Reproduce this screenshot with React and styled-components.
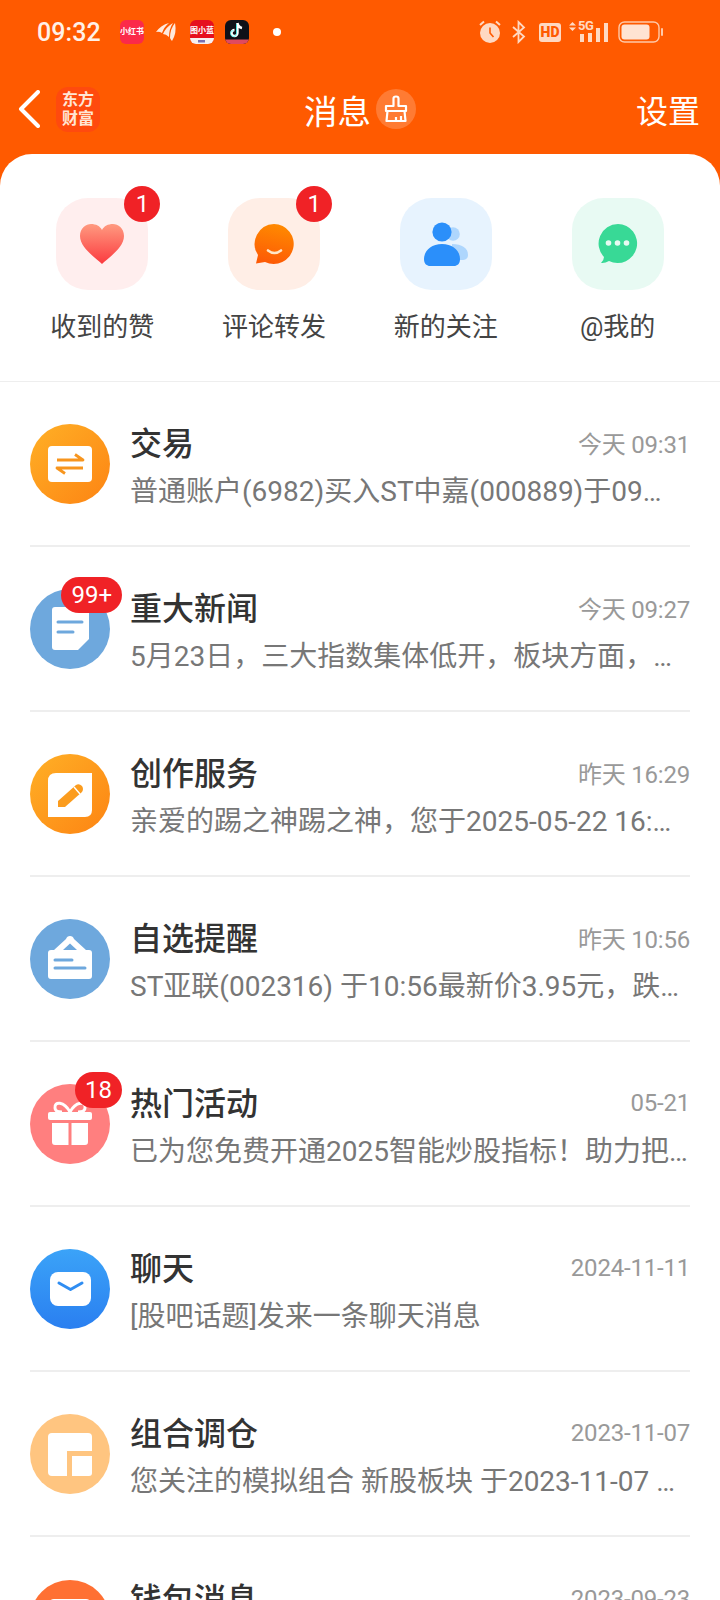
import React from "react";
import styled, { createGlobalStyle } from "styled-components";

const GlobalStyle = createGlobalStyle`
  html, body {
    margin: 0;
    padding: 0;
    background: #ff5a00;
  }
  * {
    box-sizing: border-box;
  }
`

const Page = styled.div`
  width: 720px;
  height: 1600px;
  overflow: hidden;
  background: #ff5a00;
  font-family: Roboto, "Noto Sans CJK SC", sans-serif;
`

const StatusBar = styled.div`
  height: 64px;
  padding: 0 56px 0 37px;
  display: flex;
  align-items: center;
  color: #fff1e8;
`
const Clock = styled.span`
  font-size: 25px;
  font-weight: 500;
  letter-spacing: 0.1px;
  margin-right: 19px;
`
const AppIcon = styled.div`
  width: 24px;
  height: 24px;
  margin-right: 11px;
  border-radius: 6px;
  background: ${(p) => p.$bg || "transparent"};
  color: white;
  font-size: 8px;
  font-weight: 700;
  line-height: 24px;
  text-align: center;
  white-space: nowrap;
  overflow: hidden;
  display: flex;
  align-items: center;
  justify-content: center;
  svg {
    display: block;
  }
`
const Dot = styled.span`
  width: 8px;
  height: 8px;
  border-radius: 50%;
  background: #fff;
  margin-left: 13px;
`
const StatusRight = styled.div`
  margin-left: auto;
  display: flex;
  align-items: center;
  gap: 10px;
  svg {
    display: block;
  }
`
const HdBadge = styled.span`
  width: 22px;
  height: 19px;
  margin: 0 -2px 0 2px;
  border-radius: 3px;
  background: #ffd9c2;
  color: #ff5a00;
  font-size: 14px;
  font-weight: 900;
  line-height: 19px;
  text-align: center;
`
const Signal = styled.div`
  position: relative;
  width: 39px;
  height: 22px;
`
const FiveG = styled.span`
  position: absolute;
  left: 9px;
  top: -1px;
  color: #ffd9c2;
  font-size: 13px;
  font-weight: 700;
  line-height: 12px;
  letter-spacing: -0.5px;
`

const NavBar = styled.div`
  height: 90px;
  padding: 0 20px 0 18px;
  display: grid;
  grid-template-columns: 1fr auto 1fr;
  align-items: center;
`
const NavLeft = styled.div`
  display: flex;
  align-items: center;
  gap: 16px;
`
const BrandLogo = styled.div`
  width: 44px;
  height: 45px;
  border-radius: 12px;
  background: #ff4a0e;
  color: #ffe6d5;
  font-size: 16px;
  font-weight: 700;
  line-height: 19px;
  text-align: center;
  padding-top: 3px;
`
const NavTitle = styled.div`
  display: flex;
  align-items: center;
  gap: 5px;
  padding-left: 2px;
  color: white;
  font-size: 33.5px;
`
const CleanButton = styled.div`
  width: 40px;
  height: 40px;
  border-radius: 50%;
  background: rgba(255, 255, 255, 0.2);
  display: flex;
  align-items: center;
  justify-content: center;
`
const NavAction = styled.div`
  justify-self: end;
  color: white;
  font-size: 32px;
`

const Sheet = styled.div`
  background: white;
  border-radius: 32px 32px 0 0;
`
const Shortcuts = styled.div`
  height: 228px;
  padding: 44px 16.5px 0;
  display: grid;
  grid-template-columns: repeat(4, 1fr);
  align-items: start;
  border-bottom: 1px solid #eee;
`
const Shortcut = styled.div`
  display: flex;
  flex-direction: column;
  align-items: center;
  gap: 15px;
`
const Tile = styled.div`
  position: relative;
  width: 92px;
  height: 92px;
  border-radius: 32px;
  background: ${(p) => p.$bg};
  display: flex;
  align-items: center;
  justify-content: center;
`
const ShortcutLabel = styled.div`
  color: #444;
  font-size: 26px;
  line-height: 44px;
`
const CountBadge = styled.span`
  position: absolute;
  top: -12px;
  right: -12px;
  min-width: 36px;
  height: 36px;
  padding: 0 10px;
  border-radius: 18px;
  background: #f02226;
  color: white;
  font-size: 24px;
  line-height: 36px;
  text-align: center;
`

const Row = styled.div`
  height: 165px;
  margin: 0 30px;
  display: flex;
  align-items: center;
  gap: 20px;
  border-bottom: 2px solid #eeeeee;
  &:last-child {
    border-bottom: none;
  }
`
const Avatar = styled.div`
  position: relative;
  flex: none;
  width: 80px;
  height: 80px;
  border-radius: 50%;
  background: ${(p) => p.$bg};
  svg {
    display: block;
  }
`
const RowBody = styled.div`
  flex: 1;
  min-width: 0;
  padding-top: 5px;
`
const RowHead = styled.div`
  display: flex;
  align-items: center;
  justify-content: space-between;
  height: 46px;
`
const RowTitle = styled.div`
  color: #333;
  font-size: 32px;
  font-weight: 500;
`
const RowTime = styled.div`
  color: #999;
  font-size: 24px;
  letter-spacing: -0.2px;
  padding-top: 4px;
`
const RowText = styled.div`
  margin-top: 5px;
  color: #777;
  font-size: 28px;
  line-height: 46px;
  white-space: nowrap;
  overflow: hidden;
`

const HeartIcon = () => (
  <svg width="48" height="48" viewBox="0 0 48 48">
    <defs>
      <linearGradient id="heartFill" x1="0" y1="0" x2="0" y2="1">
        <stop offset="0" stopColor="#ff9a80" />
        <stop offset="1" stopColor="#fb3a3f" />
      </linearGradient>
    </defs>
    <path d="M24 44 C19 39 2 28 2 16 C2 8 8 4 13 4 C18 4 22 6 24 10 C26 6 30 4 35 4 C40 4 46 8 46 16 C46 28 29 39 24 44Z" fill="url(#heartFill)" />
  </svg>
)
const CommentIcon = () => (
  <svg width="48" height="48" viewBox="0 0 48 48">
    <defs>
      <linearGradient id="commentFill" x1="0.6" y1="0" x2="0.4" y2="1">
        <stop offset="0" stopColor="#ff8a00" />
        <stop offset="1" stopColor="#fd5a06" />
      </linearGradient>
    </defs>
    <path d="M24 4 A20 20 0 1 1 15 42 L6 43.5 L8 35 A20 20 0 0 1 24 4Z" fill="url(#commentFill)" />
    <path d="M18 30.5 Q24.5 35.5 31 30.5" fill="none" stroke="#ffe6c8" strokeWidth="2.6" strokeLinecap="round" />
  </svg>
)
const PeopleIcon = () => (
  <svg width="48" height="48" viewBox="0 0 48 48">
    <circle cx="31" cy="14" r="6.8" fill="#aed6fd" />
    <path d="M30 24 C40 24 46 28 46 35 C46 39 43 40 40 40 L30 40Z" fill="#aed6fd" />
    <circle cx="20" cy="12" r="9.6" fill="#2b8ffa" />
    <path d="M20 24 C31 24 38 31 38 39 C38 44 35 46 32 46 L8 46 C5 46 2 44 2 39 C2 31 9 24 20 24Z" fill="#2b8ffa" />
  </svg>
)
const ChatIcon = () => (
  <svg width="48" height="48" viewBox="0 0 48 48">
    <path d="M24 4 A19.5 19.5 0 1 1 15 41 Q11 43.5 7 43 Q10 40 10 37 A19.5 19.5 0 0 1 24 4Z" fill="#38d996" />
    <circle cx="14.5" cy="23" r="2.8" fill="#e8faf2" />
    <circle cx="23.5" cy="23" r="2.8" fill="#e8faf2" />
    <circle cx="32.5" cy="23" r="2.8" fill="#e8faf2" />
  </svg>
)

const TradeGlyph = () => (
  <svg width="80" height="80" viewBox="0 0 80 80">
    <rect x="18" y="22" width="44" height="36" rx="4" fill="white" />
    <path d="M27 36 H53 L45 30.5 M53 44 H27 L35 49.5" fill="none" stroke="#f7951e" strokeWidth="2.8" strokeLinejoin="round" />
  </svg>
)
const NewsGlyph = () => (
  <svg width="80" height="80" viewBox="0 0 80 80">
    <path d="M25 18 H59 V50 L48 61 H25 Q22 61 22 58 V21 Q22 18 25 18Z" fill="white" />
    <path d="M28 33 H52 M28 43 H43" stroke="#6ea8dd" strokeWidth="3" strokeLinecap="round" />
  </svg>
)
const PenGlyph = () => (
  <svg width="80" height="80" viewBox="0 0 80 80">
    <path d="M26 19 H62 V56 Q62 63 55 63 H18 V27 Q18 19 26 19Z" fill="white" />
    <path d="M28 47 L46 31 Q49 29 52 32 Q54 35 52 38 L35 53 H28Z" fill="#fb9c1e" />
    <path d="M44 33 L50 40" stroke="white" strokeWidth="1.4" />
  </svg>
)
const BoardGlyph = () => (
  <svg width="80" height="80" viewBox="0 0 80 80">
    <path d="M40 17 Q43 17 44 20 L56 31 H59 Q62 31 62 34 V57 Q62 60 59 60 H21 Q18 60 18 57 V34 Q18 31 21 31 H24 L36 20 Q37 17 40 17Z" fill="white" />
    <path d="M33 31 L40 24.5 L47 31Z" fill="#6ea8dd" />
    <path d="M25 41 H42 M25 49 H55" stroke="#6ea8dd" strokeWidth="3" strokeLinecap="round" />
  </svg>
)
const GiftGlyph = () => (
  <svg width="80" height="80" viewBox="0 0 80 80">
    <path d="M40 28 C34 17 24 17 25 24 C25 27 28 28 32 28 M40 28 C46 17 56 17 55 24 C55 27 52 28 48 28" fill="none" stroke="white" strokeWidth="3" />
    <rect x="18" y="28" width="44" height="8" rx="2" fill="white" />
    <path d="M22 39 H38.5 V61 H25 Q22 61 22 58Z M41.5 39 H58 V58 Q58 61 55 61 H41.5Z" fill="white" />
  </svg>
)
const MailGlyph = () => (
  <svg width="80" height="80" viewBox="0 0 80 80">
    <rect x="20" y="23" width="41" height="34" rx="8" fill="white" />
    <path d="M29 34 L40.5 40.5 L52 34" fill="none" stroke="#2f8df2" strokeWidth="3" strokeLinecap="round" strokeLinejoin="round" />
  </svg>
)
const ComboGlyph = () => (
  <svg width="80" height="80" viewBox="0 0 80 80">
    <rect x="18" y="19" width="44" height="43" rx="4" fill="white" />
    <path d="M37 37 H62 V62 H37Z" fill="#ffc580" />
    <path d="M42 42 H62 V59 Q62 62 59 62 H42Z" fill="white" />
  </svg>
)
const WalletGlyph = () => (
  <svg width="80" height="80" viewBox="0 0 80 80">
    <rect x="18" y="19" width="44" height="36" rx="6" fill="white" />
  </svg>
)

// the previews are cut off in the screenshot itself, so they end in a literal ellipsis
const rows = [
  { title: "交易", time: "今天 09:31", text: "普通账户(6982)买入ST中嘉(000889)于09…", bg: "linear-gradient(135deg, #ffb026, #fd8413)", glyph: <TradeGlyph /> },
  { title: "重大新闻", time: "今天 09:27", text: "5月23日，三大指数集体低开，板块方面，…", bg: "#6ea8dd", glyph: <NewsGlyph />, badge: "99+" },
  { title: "创作服务", time: "昨天 16:29", text: "亲爱的踢之神踢之神，您于2025-05-22 16:…", bg: "linear-gradient(135deg, #ffb026, #fd8413)", glyph: <PenGlyph /> },
  { title: "自选提醒", time: "昨天 10:56", text: "ST亚联(002316) 于10:56最新价3.95元，跌…", bg: "#6ea8dd", glyph: <BoardGlyph /> },
  { title: "热门活动", time: "05-21", text: "已为您免费开通2025智能炒股指标！助力把…", bg: "#ff7f7f", glyph: <GiftGlyph />, badge: "18" },
  { title: "聊天", time: "2024-11-11", text: "[股吧话题]发来一条聊天消息", bg: "linear-gradient(180deg, #3ba3f8, #2a7ff0)", glyph: <MailGlyph /> },
  { title: "组合调仓", time: "2023-11-07", text: "您关注的模拟组合 新股板块 于2023-11-07 …", bg: "#ffc580", glyph: <ComboGlyph /> },
  { title: "钱包消息", time: "2023-09-23", text: "\u00a0", bg: "#ff7033", glyph: <WalletGlyph /> },
];

export default function App() {
  return (
    <Page>
      <GlobalStyle />
      <StatusBar>
        <Clock>09:32</Clock>
        <AppIcon $bg="#fb2a4a">小红书</AppIcon>
        <AppIcon>
          <svg width="24" height="24" viewBox="0 0 24 24" fill="#ffe9dc">
            <path d="M1 12 Q6 5 14 3 Q9 7 7 13 Q4 11 1 12Z" />
            <path d="M8 14 Q11 7 18 3 Q14 9 14 17 Q11 14 8 14Z" />
            <path d="M15 18 Q15 9 20 3 Q22 13 17 21 Q16 20 15 18Z" />
          </svg>
        </AppIcon>
        <AppIcon $bg="#e60f1e">
          <svg width="24" height="24" viewBox="0 0 24 24">
            <rect x="0" y="18" width="24" height="6" fill="#f7f0f0" />
            <rect x="8" y="20" width="7" height="2.5" fill="#7a6fb0" />
            <text x="12" y="13" textAnchor="middle" fontSize="8" fontWeight="700" fill="white">图小蓝</text>
          </svg>
        </AppIcon>
        <AppIcon $bg="#0f1018">
          <svg width="24" height="24" viewBox="0 0 24 24">
            <rect x="0" y="19.5" width="24" height="4.5" fill="#e04a5f" />
            <path d="M12.5 3 V13 A3 3 0 1 1 9.5 10 M12.5 3 Q13 7 17 8" fill="none" stroke="#ffffff" strokeWidth="2.4" />
            <path d="M11.5 4 V13.5 A3 3 0 1 1 8.5 10.5" fill="none" stroke="#25f4ee" strokeWidth="0.7" />
          </svg>
        </AppIcon>
        <Dot />
        <StatusRight>
          <svg width="22" height="24" viewBox="0 0 22 24">
            <path d="M1 5 L5 1.5 M21 5 L17 1.5" stroke="#ffd9c2" strokeWidth="2" />
            <circle cx="11" cy="13" r="10" fill="#ffd9c2" />
            <path d="M11 7.5 V13 L14.5 17" fill="none" stroke="#ff5a00" strokeWidth="1.6" />
          </svg>
          <svg width="16" height="24" viewBox="-1 0 16 24">
            <path d="M1 7 L12 16.5 L6.5 22 V2 L12 7.5 L1 17" fill="none" stroke="#ffd9c2" strokeWidth="1.8" />
          </svg>
          <HdBadge>HD</HdBadge>
          <Signal>
            <FiveG>5G</FiveG>
            <svg width="39" height="22" viewBox="0 0 39 22">
              <path d="M3.5 1 L7 4.5 H0Z M3.5 10 L7 6.5 H0Z" fill="#ffd9c2" />
              <rect x="11" y="13" width="4" height="8" fill="#ffd9c2" />
              <rect x="19" y="12" width="4" height="9" fill="#ffd9c2" />
              <rect x="27" y="7" width="4" height="14" fill="#ffd9c2" />
              <rect x="35" y="2" width="4" height="19" fill="#ffd9c2" />
            </svg>
          </Signal>
          <svg width="46" height="22" viewBox="0 0 46 22">
            <rect x="1" y="1" width="40" height="20" rx="5.5" fill="none" stroke="#ffc9a8" strokeWidth="1.4" />
            <rect x="3.5" y="3.5" width="28" height="15" rx="3" fill="#ffe3d2" />
            <rect x="43" y="7" width="2" height="8" rx="1" fill="#ffc9a8" />
          </svg>
        </StatusRight>
      </StatusBar>
      <NavBar>
        <NavLeft>
          <svg width="22" height="38" viewBox="0 0 22 38">
            <path d="M20 2 L3 19 L20 36" fill="none" stroke="white" strokeWidth="4" strokeLinecap="round" strokeLinejoin="round" />
          </svg>
          <BrandLogo>东方<br />财富</BrandLogo>
        </NavLeft>
        <NavTitle>
          消息
          <CleanButton>
            <svg width="26" height="28" viewBox="0 0 26 28" fill="none" stroke="white" strokeWidth="2.2" strokeLinejoin="round">
              <path d="M10.5 11 V3.5 Q10.5 1.5 13 1.5 Q15.5 1.5 15.5 3.5 V11 H23 V16 H3 V11Z" />
              <path d="M4.5 16 L3.5 26 H22.5 L21.5 16" />
              <path d="M13 26 V22 M18 26 V21" />
            </svg>
          </CleanButton>
        </NavTitle>
        <NavAction>设置</NavAction>
      </NavBar>
      <Sheet>
        <Shortcuts>
          <Shortcut>
            <Tile $bg="#ffeeee"><HeartIcon /><CountBadge>1</CountBadge></Tile>
            <ShortcutLabel>收到的赞</ShortcutLabel>
          </Shortcut>
          <Shortcut>
            <Tile $bg="#ffeee6"><CommentIcon /><CountBadge>1</CountBadge></Tile>
            <ShortcutLabel>评论转发</ShortcutLabel>
          </Shortcut>
          <Shortcut>
            <Tile $bg="#e7f3fe"><PeopleIcon /></Tile>
            <ShortcutLabel>新的关注</ShortcutLabel>
          </Shortcut>
          <Shortcut>
            <Tile $bg="#e8faf3"><ChatIcon /></Tile>
            <ShortcutLabel>@我的</ShortcutLabel>
          </Shortcut>
        </Shortcuts>
        {rows.map((row) => (
          <Row key={row.title}>
            <Avatar $bg={row.bg}>
              {row.glyph}
              {row.badge && <CountBadge>{row.badge}</CountBadge>}
            </Avatar>
            <RowBody>
              <RowHead>
                <RowTitle>{row.title}</RowTitle>
                <RowTime>{row.time}</RowTime>
              </RowHead>
              <RowText>{row.text}</RowText>
            </RowBody>
          </Row>
        ))}
      </Sheet>
    </Page>
  )
}
